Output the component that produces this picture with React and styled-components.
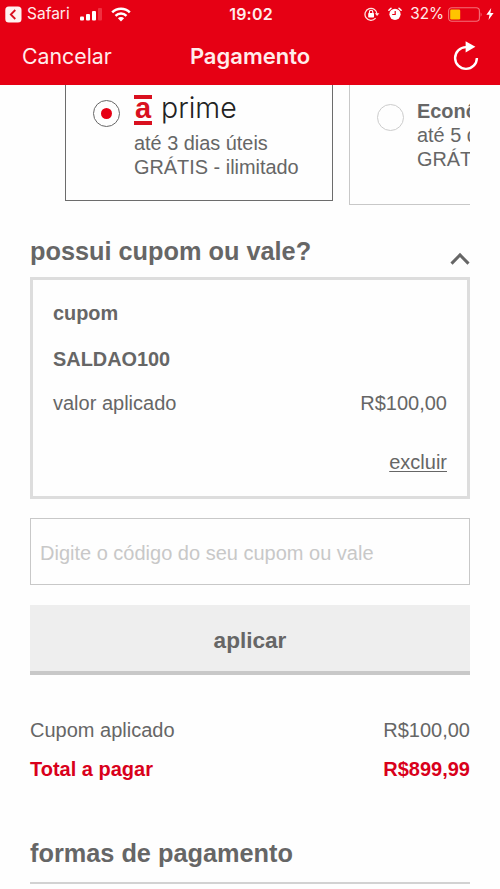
import React from 'react'
import styled, { createGlobalStyle } from 'styled-components';

const GlobalStyle = createGlobalStyle`
*{box-sizing:border-box;}
body{
margin:0;
background:#fefefe;
color:#666;
font-family:"Liberation Sans", Arial, sans-serif;
overflow:hidden;
}
`;
const Container = styled.div`
width:500px;
height:889px;
overflow:hidden;
display:flex;
flex-direction:column;
`;
const Header = styled.header`
height:85px;
flex-shrink:0;
background:#e60014;
color:#ffeceb;
font-family:Inter, sans-serif;
`;
const StatusBar = styled.div`
height:28px;
padding:0 6px 0 5px;
display:grid;
grid-template-columns:1fr auto 1fr;
align-items:center;
font-size:16px;
line-height:28px;
`;
const StatusGroup = styled.div`
display:flex;
align-items:center;
justify-content:${(props) => props.$end ? "flex-end" : "flex-start"};
`;
const StatusText = styled.span`
font-size:${(props) => props.$size}px;
margin:${(props) => props.$margin || "0"};
`;
const Gap = styled.i`
width:${(props) => props.$width}px;
`;
const Clock = styled.span`
margin-left:3px;
font-size:16px;
font-weight:600;
letter-spacing:0.2px;
`;
const Nav = styled.nav`
height:57px;
padding:0 21px 0 22px;
display:grid;
grid-template-columns:1fr auto 1fr;
align-items:center;
line-height:57px;
`;
const Cancel = styled.span`
font-size:21.3px;
`;
const NavTitle = styled.h1`
margin:0 1px 0 0;
font-size:22px;
font-weight:600;
`;
const Refresh = styled.svg`
justify-self:end;
margin-bottom:2px;
`;
const Shipping = styled.section`
height:120px;
flex-shrink:0;
margin:0 30px 0 65px;
display:flex;
align-items:flex-start;
gap:16px;
overflow:hidden;
`;
const Option = styled.div`
width:268px;
height:${(props) => props.$selected ? 116 : 120}px;
flex-shrink:0;
display:flex;
padding-top:${(props) => props.$selected ? 9 : 14}px;
padding-left:27px;
border:1px solid ${(props) => props.$selected ? "#6c6c6c" : "#c8c8c8"};
border-top:0;
`;
const Radio = styled.span`
width:27px;
height:27px;
flex-shrink:0;
margin:${(props) => props.$selected ? "6px 14px 0 0" : "5px 13px 0 0"};
border:${(props) => props.$selected ? "1px solid #666" : "1.5px solid #ccc"};
border-radius:50%;
display:flex;
align-items:center;
justify-content:center;
`;
const Dot = styled.i`
width:11px;
height:11px;
border-radius:50%;
background:#e60014;
`;
const OptionText = styled.div`
font-size:19.9px;
line-height:24px;
white-space:nowrap;
`;
const Prime = styled.div`
height:37px;
display:flex;
align-items:flex-start;
`;
const Brand = styled.b`
width:18px;
height:30px;
margin-top:1px;
border-top:4px solid #d9101f;
border-bottom:4px solid #d9101f;
color:#d9101f;
font-size:29px;
line-height:18px;
display:flex;
justify-content:center;
`;
const PrimeName = styled.span`
margin-left:9px;
color:#222;
font-family:Inter, sans-serif;
font-weight:300;
font-size:28.5px;
line-height:28px;
`;
const Content = styled.main`
padding:31px 30px 0;
display:flex;
flex-direction:column;
`;
const TitleRow = styled.div`
height:41px;
display:flex;
justify-content:space-between;
`;
const Title = styled.h2`
margin:0;
font-size:25.3px;
line-height:30px;
`;
const Chevron = styled.svg`
margin-top:16px;
`;
const Coupon = styled.div`
height:222px;
padding:21px 20px 0;
border:3px solid #ddd;
display:flex;
flex-direction:column;
font-size:20px;
line-height:24px;
`;
const Label = styled.b`
margin-bottom:${(props) => props.$gap}px;
font-size:19.9px;
`;
const Row = styled.div`
display:flex;
justify-content:space-between;
font-size:20px;
line-height:24px;
`;
const Remove = styled.a`
margin-top:35px;
align-self:flex-end;
text-decoration:underline;
text-decoration-thickness:1px;
text-underline-offset:2px;
`;
const Input = styled.input`
height:67px;
margin-top:19px;
padding:4px 9px 0;
border:1px solid #c8c8c8;
border-radius:0;
background:#fefefe;
outline:none;
font-family:inherit;
font-size:20px;
&::placeholder{
color:#c8c8c8;
opacity:1;
}
`;
const Button = styled.button`
height:70px;
margin-top:20px;
padding:6px 0 0;
border:0;
border-bottom:4px solid #c8c8c8;
background:#eee;
color:#666;
font-family:inherit;
font-size:22.6px;
font-weight:bold;
`;
const Totals = styled.div`
padding:43px 0 57px;
display:flex;
flex-direction:column;
gap:15px;
`;
const Total = styled(Row)`
color:#d9001b;
font-weight:bold;
`;
const Payment = styled.section`
height:46px;
border-bottom:2px solid #d2d2d2;
`;

const BackIcon = () => (
  <svg width="17" height="17" viewBox="0 0 17 17">
    <rect x="0.3" y="0.5" width="16.2" height="16" rx="3.5" fill="#fff3f1" />
    <path d="M10.3 4L5.8 8.5L10.3 13" fill="none" stroke="#d9101f" strokeWidth="1.8" />
  </svg>
)

const SignalIcon = () => (
  <svg width="22" height="13" viewBox="0 0 22 13">
    <rect x="0" y="8.5" width="4" height="4" rx="1" fill="#fff" />
    <rect x="6" y="6" width="4" height="6.5" rx="1" fill="#fff" />
    <rect x="12" y="3" width="4" height="9.5" rx="1" fill="#fff" />
    <rect x="18" y="0" width="4" height="12.5" rx="1" fill="#f0303f" />
  </svg>
)

const WifiIcon = () => (
  <svg width="20" height="15" viewBox="0 0 20 15">
    <path d="M1.2 5.4A12.5 12.5 0 0 1 18.8 5.4" fill="none" stroke="#fff" strokeWidth="2.5" />
    <path d="M4.5 8.8A7.8 7.8 0 0 1 15.5 8.8" fill="none" stroke="#fff" strokeWidth="2.4" />
    <path d="M10 14.5L6.9 11.3A4.4 4.4 0 0 1 13.1 11.3Z" fill="#fff" />
  </svg>
)

const LockIcon = () => (
  <svg width="16" height="14" viewBox="0 0 16 14">
    <path d="M11.6 11.2A6 6 0 1 1 13 7.2" fill="none" stroke="#ffe3e1" strokeWidth="1.3" />
    <path d="M10.8 6.2H15.4L13.1 9Z" fill="#ffe3e1" />
    <rect x="4.2" y="6.1" width="5.8" height="4.3" rx="0.6" fill="#fff" />
    <path d="M5.4 6.3V5A1.7 1.7 0 0 1 8.8 5V6.3" fill="none" stroke="#fff" strokeWidth="1.1" />
  </svg>
)

const AlarmIcon = () => (
  <svg width="14" height="14" viewBox="0 0 14 14">
    <circle cx="7" cy="7.3" r="5.6" fill="#fff" />
    <path d="M0.9 3.2L3 1.2M13.1 3.2L11 1.2" stroke="#fff" strokeWidth="1.5" strokeLinecap="round" />
    <path d="M7.2 3.9V7.5H4.2" fill="none" stroke="#e60014" strokeWidth="1.2" />
  </svg>
)

const BatteryIcon = () => (
  <svg width="35" height="15" viewBox="0 0 35 15">
    <rect x="0.6" y="0.8" width="30.8" height="13.4" rx="3.2" fill="none" stroke="#f4707a" strokeWidth="1.1" />
    <rect x="2.2" y="2.5" width="10" height="10" rx="1.2" fill="#ffc400" />
    <path d="M32.6 5.2Q34.6 7.5 32.6 9.8Z" fill="#f4707a" />
  </svg>
)

const BoltIcon = () => (
  <svg width="8" height="12" viewBox="0 0 8 12">
    <path d="M5.2 0L0.4 6.7H3.5L2.5 12L7.6 4.9H4.4Z" fill="#fff" />
  </svg>
)

const App = () => {
  return (
    <Container>
      <GlobalStyle />
      <Header>
        <StatusBar>
          <StatusGroup>
            <BackIcon />
            <StatusText $size={15.5} $margin="0 10px 0 5px">Safari</StatusText>
            <SignalIcon />
            <Gap $width={9} />
            <WifiIcon />
          </StatusGroup>
          <Clock>19:02</Clock>
          <StatusGroup $end>
            <LockIcon />
            <Gap $width={8} />
            <AlarmIcon />
            <StatusText $size={15.3} $margin="0 4px 0 8px">32%</StatusText>
            <BatteryIcon />
            <Gap $width={3} />
            <BoltIcon />
          </StatusGroup>
        </StatusBar>
        <Nav>
          <Cancel>Cancelar</Cancel>
          <NavTitle>Pagamento</NavTitle>
          <Refresh width="26" height="30" viewBox="0 0 26 30">
            <path d="M15 6.1H13A10.9 10.9 0 1 0 23.9 17" fill="none" stroke="#fff" strokeWidth="2.4" />
            <path d="M12.6 0.2L22.4 5.8L12.6 11.6Z" fill="#fff" />
          </Refresh>
        </Nav>
      </Header>
      <Shipping>
        <Option $selected>
          <Radio $selected><Dot /></Radio>
          <OptionText>
            <Prime>
              <Brand>a</Brand>
              <PrimeName>prime</PrimeName>
            </Prime>
            <div>até 3 dias úteis</div>
            <div>GRÁTIS - ilimitado</div>
          </OptionText>
        </Option>
        <Option>
          <Radio />
          <OptionText>
            <b>Econômica</b>
            <div>até 5 dias úteis</div>
            <div>GRÁTIS</div>
          </OptionText>
        </Option>
      </Shipping>
      <Content>
        <TitleRow>
          <Title>possui cupom ou vale?</Title>
          <Chevron width="20" height="13" viewBox="0 0 20 13">
            <path d="M1.5 11.6L10 3L18.5 11.6" fill="none" stroke="#666" strokeWidth="3" />
          </Chevron>
        </TitleRow>
        <Coupon>
          <Label $gap={22}>cupom</Label>
          <Label $gap={20}>SALDAO100</Label>
          <Row>
            <span>valor aplicado</span>
            <span>R$100,00</span>
          </Row>
          <Remove>excluir</Remove>
        </Coupon>
        <Input placeholder="Digite o código do seu cupom ou vale" />
        <Button>aplicar</Button>
        <Totals>
          <Row>
            <span>Cupom aplicado</span>
            <span>R$100,00</span>
          </Row>
          <Total>
            <span>Total a pagar</span>
            <span>R$899,99</span>
          </Total>
        </Totals>
        <Payment>
          <Title>formas de pagamento</Title>
        </Payment>
      </Content>
    </Container>
  )
}

export default App
